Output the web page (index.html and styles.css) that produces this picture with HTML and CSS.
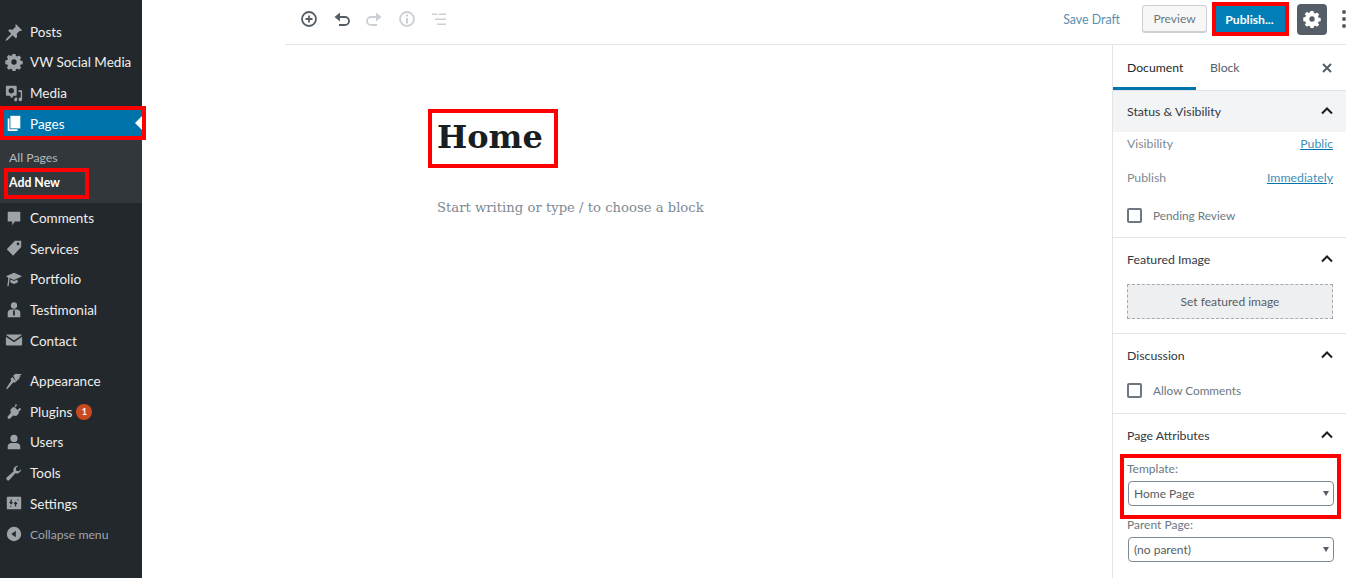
FILE: index.html
```html
<!DOCTYPE html>
<html lang="en">
<head>
    <meta charset="UTF-8">
    <meta name="viewport" content="width=device-width, initial-scale=1.0">
    <title>Edit Page</title>
    <link rel="stylesheet" href="styles.css">
</head>
<body>
    <aside class="admin-menu">
        <a class="menu-item"><svg class="menu-icon" viewBox="0 0 20 20"><path d="M12 1l7 7-1.500 1-1-.5-3.500 3.500.5 3.500-1.500 1.500-3.500-3.500-5.500 5.500-2.500 1 1-2.500 5.500-5.500-3.500-3.500 1.500-1.500 3.500.5 3.500-3.500-.5-1z"/></svg>Posts</a>
        <a class="menu-item"><svg class="menu-icon" viewBox="0 0 20 20"><path fill-rule="evenodd" d="M8.300 1h3.400l.4 2.300 1.600.7 1.900-1.300 2.400 2.400-1.300 1.900.7 1.600 2.300.4v3.400l-2.300.4-.7 1.600 1.300 1.900-2.400 2.400-1.900-1.300-1.600.7-.4 2.300H8.300l-.4-2.300-1.600-.7-1.900 1.300-2.400-2.400 1.300-1.900-.7-1.600-2.300-.4V8.300l2.300-.4.700-1.600-1.300-1.900 2.400-2.400 1.900 1.300 1.600-.7zM10 7a3 3 0 1 0 0 6 3 3 0 0 0 0-6z"/></svg>VW Social Media</a>
        <a class="menu-item"><svg class="menu-icon" viewBox="0 0 20 20"><path fill-rule="evenodd" d="M2 2h10a1 1 0 0 1 1 1v9a1 1 0 0 1-1 1H9v2H6v-2H2a1 1 0 0 1-1-1V3a1 1 0 0 1 1-1zm5 2.500a3 3 0 1 0 0 6 3 3 0 0 0 0-6z"/><path d="M15 7h4v10a2 2 0 1 1-1.500-1.900V9H15zM11 15h2.500v2a1.700 1.700 0 1 1-2.500-1z"/></svg>Media</a>
        <a class="menu-item is-current"><svg class="menu-icon" viewBox="0 0 20 20"><path d="M6 2h11v14H6z"/><path d="M3 5h2v12h9v2H3z"/></svg>Pages</a>
        <div class="submenu">
            <a class="submenu-item">All Pages</a>
            <a class="submenu-item is-active">Add New</a>
        </div>
        <a class="menu-item"><svg class="menu-icon" viewBox="0 0 20 20"><path d="M4 3h12a1 1 0 0 1 1 1v9a1 1 0 0 1-1 1h-5l-3 4v-4H4a1 1 0 0 1-1-1V4a1 1 0 0 1 1-1z"/></svg>Comments</a>
        <a class="menu-item"><svg class="menu-icon" viewBox="0 0 20 20"><path fill-rule="evenodd" d="M11 2h7v7l-9 9.500-7-7zm3.500 2a1.500 1.500 0 1 0 0 3 1.500 1.500 0 0 0 0-3z"/></svg>Services</a>
        <a class="menu-item"><svg class="menu-icon" viewBox="0 0 20 20"><path d="M10 3l9 4-9 4-5-2.200V11L4 18H2.500l1-7V8.300L1 7z"/><path d="M6 10.500l4 1.800 4-1.800V14l-4 1.500L6 14z"/></svg>Portfolio</a>
        <a class="menu-item"><svg class="menu-icon" viewBox="0 0 20 20"><circle cx="10" cy="5" r="3.500"/><path fill-rule="evenodd" d="M3 18v-5c0-2 1.500-3.500 4-3.500h6c2.500 0 4 1.500 4 3.500v5zM9 10.500V16h2v-5.500z"/></svg>Testimonial</a>
        <a class="menu-item"><svg class="menu-icon" viewBox="0 0 20 20"><path d="M2 4h16a1 1 0 0 1 .8.400L10 10.500 1.200 4.400A1 1 0 0 1 2 4z"/><path d="M1 6.500l9 6 9-6V15a1 1 0 0 1-1 1H2a1 1 0 0 1-1-1z"/></svg>Contact</a>
        <a class="menu-item has-gap"><svg class="menu-icon" viewBox="0 0 20 20"><path d="M9 4l3-2 7 .5-3 2 1.500 1-2 1 .5 1.500-2 .5-1 2-1-.5z"/><path d="M8 5.500l4.500 5-1.500 1.500L9.500 11 3 18.500H1L7 9.500 6 8z"/></svg>Appearance</a>
        <a class="menu-item"><svg class="menu-icon" viewBox="0 0 20 20"><path d="M12 2l1.500 1.500L11 6l3 3 2.500-2.500L18 8l-3 3 .5 1.500-3 3-3.500-.5-3.500 3.500H3v-2.500L6.500 12 6 8.500l3-3L10.500 6z"/></svg>Plugins<span class="update-badge">1</span></a>
        <a class="menu-item"><svg class="menu-icon" viewBox="0 0 20 20"><circle cx="10" cy="6" r="4"/><path d="M3 18v-3c0-2.500 2-4 4-4h6c2 0 4 1.500 4 4v3z"/></svg>Users</a>
        <a class="menu-item"><svg class="menu-icon" viewBox="0 0 20 20"><path d="M18 5.500a5 5 0 0 1-6.500 4.800l-6.700 7.400a2 2 0 0 1-3-2.600l7.600-6.700A5 5 0 0 1 15 2l-3 2.500.5 3 3 .5z"/></svg>Tools</a>
        <a class="menu-item"><svg class="menu-icon" viewBox="0 0 20 20"><path fill-rule="evenodd" d="M3 3h14a1 1 0 0 1 1 1v12a1 1 0 0 1-1 1H3a1 1 0 0 1-1-1V4a1 1 0 0 1 1-1zm3 3v3H4.500L6.800 12 9 9H7.500V6zm1 8.500v-1H5.500v1zM12.500 14V11H14l-2.200-3L9.500 11H11v3zm2.500-8v1h-1.500V6z"/></svg>Settings</a>
        <a class="menu-item is-collapse"><svg class="menu-icon" viewBox="0 0 20 20"><path fill-rule="evenodd" d="M10 2a8 8 0 1 1 0 16 8 8 0 0 1 0-16zm2 4.500L7 10l5 3.500z"/></svg>Collapse menu</a>
    </aside>

    <div class="editor">
        <header class="toolbar">
            <div class="toolbar-left">
                <svg class="tool-icon" viewBox="0 0 20 20"><circle cx="10" cy="10" r="7" class="line"/><path d="M10 6.500v7M6.500 10h7" class="line"/></svg>
                <svg class="tool-icon" viewBox="0 0 20 20"><path d="M4 8h9a4 4 0 0 1 0 8H7" class="line"/><path d="M8 3.500v9L2.500 8z"/></svg>
                <svg class="tool-icon is-off" viewBox="0 0 20 20"><path d="M16 8H7a4 4 0 0 0 0 8h6" class="line"/><path d="M12 3.500v9L17.500 8z"/></svg>
                <svg class="tool-icon is-off" viewBox="0 0 20 20"><circle cx="10" cy="10" r="7" class="line"/><path d="M9 9h2v5.500H9zM9 5.500h2v2H9z"/></svg>
                <svg class="tool-icon is-off" viewBox="0 0 20 20"><path d="M3 4.500h5v1.500H3zM6 9.500h11V11H6zM8 14.500h9V16H8zM9.500 4.500H17V6H9.500z"/></svg>
            </div>
            <div class="toolbar-right">
                <a class="save-draft">Save Draft</a>
                <button class="btn-preview">Preview</button>
                <button class="btn-publish">Publish...</button>
                <button class="btn-settings"><svg viewBox="0 0 20 20"><path fill-rule="evenodd" d="M8.300 1h3.400l.4 2.300 1.600.7 1.900-1.300 2.400 2.400-1.300 1.900.7 1.600 2.300.4v3.400l-2.300.4-.7 1.600 1.300 1.900-2.400 2.400-1.900-1.300-1.600.7-.4 2.300H8.300l-.4-2.300-1.600-.7-1.900 1.300-2.400-2.400 1.300-1.900-.7-1.600-2.300-.4V8.300l2.300-.4.700-1.600-1.300-1.900 2.400-2.400 1.900 1.300 1.600-.7zM10 7a3 3 0 1 0 0 6 3 3 0 0 0 0-6z"/></svg></button>
                <div class="more-dots"><i></i><i></i><i></i></div>
            </div>
        </header>

        <div class="editor-body">
            <main class="canvas">
                <h1 class="post-title">Home</h1>
                <p class="placeholder">Start writing or type / to choose a block</p>
            </main>

            <aside class="settings">
                <div class="tabs">
                    <span class="tab is-active">Document</span>
                    <span class="tab">Block</span>
                    <svg class="close-icon" viewBox="0 0 10 10"><path d="M1 1l8 8M9 1L1 9"/></svg>
                </div>

                <section class="panel panel-status">
                    <div class="panel-head is-shaded"><span>Status &amp; Visibility</span><svg class="chevron" viewBox="0 0 12 8"><path d="M1 6.500l5-5 5 5"/></svg></div>
                    <div class="row row-visibility"><span>Visibility</span><a>Public</a></div>
                    <div class="row row-publish"><span>Publish</span><a>Immediately</a></div>
                    <label class="check check-pending"><input type="checkbox">Pending Review</label>
                </section>

                <section class="panel panel-image">
                    <div class="panel-head"><span>Featured Image</span><svg class="chevron" viewBox="0 0 12 8"><path d="M1 6.500l5-5 5 5"/></svg></div>
                    <button class="set-image">Set featured image</button>
                </section>

                <section class="panel panel-discussion">
                    <div class="panel-head"><span>Discussion</span><svg class="chevron" viewBox="0 0 12 8"><path d="M1 6.500l5-5 5 5"/></svg></div>
                    <label class="check"><input type="checkbox">Allow Comments</label>
                </section>

                <section class="panel panel-attrs">
                    <div class="panel-head"><span>Page Attributes</span><svg class="chevron" viewBox="0 0 12 8"><path d="M1 6.500l5-5 5 5"/></svg></div>
                    <label class="field-label">Template:</label>
                    <div class="select-wrap"><select><option>Home Page</option></select></div>
                    <label class="field-label">Parent Page:</label>
                    <div class="select-wrap"><select><option>(no parent)</option></select></div>
                </section>
            </aside>
        </div>
    </div>

    <!-- red annotation boxes drawn over the screenshot -->
    <div class="mark mark-pages"></div>
    <div class="mark mark-add"></div>
    <div class="mark mark-title"></div>
    <div class="mark mark-publish"></div>
    <div class="mark mark-template"></div>
</body>
</html>
```

FILE: styles.css
```css
* {
    box-sizing: border-box;
}
html, body {
    height: 100%;
    overflow: hidden;
}
body {
    display: flex;
    margin: 0;
    font-family: Lato, "Noto Sans", sans-serif;
    font-size: 12.5px;
    color: #555d66;
    background-color: #ffffff;
}

/* admin menu */
.admin-menu {
    width: 142px;
    flex: none;
    padding-top: 16.5px;
    background-color: #23282d;
}
.menu-item {
    position: relative;
    display: flex;
    align-items: center;
    height: 30.6px;
    padding-left: 30px;
    font-size: 13.5px;
    color: #eeeeee;
}
.menu-item.has-gap {
    margin-top: 10px;
}
.menu-icon {
    position: absolute;
    left: 5px;
    top: 6px;
    width: 18px;
    height: 18px;
    fill: #9ea3a8;
}
.menu-item.is-current {
    color: #ffffff;
    background-color: #0073aa;
}
.menu-item.is-current .menu-icon {
    fill: #ffffff;
}
.menu-item.is-current::after {
    content: "";
    position: absolute;
    right: 0;
    top: 8px;
    border: 7px solid transparent;
    border-right-color: #ffffff;
    border-left-width: 0;
}
.menu-item.is-collapse {
    font-size: 12.2px;
    color: #a0a5aa;
}
.submenu {
    display: flex;
    flex-direction: column;
    height: 64px;
    padding: 6px 0 0 9px;
    background-color: #32373c;
}
.submenu-item {
    height: 25px;
    line-height: 25px;
    font-size: 12.3px;
    color: #b4b9be;
}
.submenu-item.is-active {
    font-weight: 700;
    color: #ffffff;
}
.update-badge {
    width: 16px;
    height: 16px;
    margin-left: 4px;
    border-radius: 50%;
    font-size: 9px;
    font-weight: 700;
    line-height: 16px;
    text-align: center;
    color: #ffffff;
    background-color: #ca4a1f;
}

/* editor */
.editor {
    flex: 1;
    display: flex;
    flex-direction: column;
    min-width: 0;
    padding-left: 143px;
}
.toolbar {
    display: flex;
    justify-content: space-between;
    align-items: center;
    height: 45px;
    padding-bottom: 6px;
    border-bottom: 1px solid #e2e4e7;
}
.toolbar-left {
    display: flex;
    align-items: center;
    gap: 12.5px;
    padding-left: 14px;
}
.tool-icon {
    width: 20px;
    height: 20px;
    fill: #555d66;
}
.tool-icon .line {
    fill: none;
    stroke: #555d66;
    stroke-width: 1.8;
}
.tool-icon.is-off {
    fill: #ccd0d4;
}
.tool-icon.is-off .line {
    stroke: #ccd0d4;
}
.toolbar-right {
    display: flex;
    align-items: center;
    height: 38px;
}
.save-draft {
    margin-right: 22px;
    font-size: 12.4px;
    color: #5b8fb0;
}
.btn-preview {
    width: 65px;
    height: 28px;
    padding: 0;
    border: 1px solid #ccd0d4;
    border-bottom-width: 2px;
    border-radius: 3px;
    font: inherit;
    font-size: 12px;
    color: #6c7781;
    background-color: #f7f7f7;
}
.btn-publish {
    width: 69px;
    height: 28px;
    margin-left: 9px;
    padding: 0 2px 0 0;
    border: none;
    font: inherit;
    font-size: 12.2px;
    font-weight: 700;
    color: #ffffff;
    background-color: #007fb6;
}
.btn-settings {
    display: flex;
    justify-content: center;
    align-items: center;
    width: 30px;
    height: 31px;
    margin-left: 12px;
    padding: 0;
    border: none;
    border-radius: 4px;
    background-color: #555d66;
}
.btn-settings svg {
    width: 18px;
    height: 18px;
    fill: #ffffff;
}
.more-dots {
    display: flex;
    flex-direction: column;
    gap: 3px;
    width: 19px;
    padding-left: 15px;
}
.more-dots i {
    width: 4px;
    height: 4px;
    border-radius: 50%;
    background-color: #555d66;
}
.editor-body {
    flex: 1;
    display: flex;
    min-height: 0;
}
.canvas {
    flex: 1;
    padding: 72px 0 0 152px;
}
.post-title {
    margin: 0;
    font-family: "DejaVu Serif", serif;
    font-size: 32px;
    line-height: 40px;
    color: #191e23;
}
.placeholder {
    margin: 41px 0 0;
    font-family: "DejaVu Serif", serif;
    font-size: 13.2px;
    line-height: 20px;
    color: #7e8993;
}

/* settings sidebar */
.settings {
    width: 234px;
    flex: none;
    border-left: 1px solid #e2e4e7;
}
.tabs {
    position: relative;
    display: flex;
    height: 46px;
    border-bottom: 1px solid #e2e4e7;
}
.tab {
    padding: 0 14px;
    font-size: 12.2px;
    line-height: 46px;
    color: #555d66;
}
.tab.is-active {
    width: 83px;
    color: #23282d;
    box-shadow: inset 0 -3px 0 #0073aa;
}
.close-icon {
    position: absolute;
    right: 14px;
    top: 18px;
    width: 10px;
    height: 10px;
    fill: none;
    stroke: #555d66;
    stroke-width: 2;
}
.panel {
    padding-bottom: 14px;
    border-bottom: 1px solid #e2e4e7;
}
.panel-status {
    height: 147px;
}
.panel-image {
    height: 96px;
}
.panel-discussion {
    height: 80px;
}
.panel-attrs {
    border-bottom: none;
}
.panel-head {
    display: flex;
    justify-content: space-between;
    align-items: center;
    height: 42px;
    padding: 0 13px 0 14px;
    font-size: 12.3px;
    color: #32373c;
}
.panel-head.is-shaded {
    height: 41px;
    padding-bottom: 1px;
    background-color: #f3f4f5;
}
.chevron {
    width: 12px;
    height: 8px;
    fill: none;
    stroke: #191e23;
    stroke-width: 2;
}
.row {
    display: flex;
    justify-content: space-between;
    align-items: center;
    height: 20px;
    padding: 0 13px 0 14px;
    font-size: 12.3px;
    color: #7e8993;
}
.row-visibility {
    margin-top: 1px;
}
.row-publish {
    margin-top: 14px;
}
.row a {
    color: #3d8fb8;
    text-decoration: underline;
    text-decoration-color: #0073aa;
}
.check {
    display: flex;
    align-items: center;
    gap: 11px;
    height: 16px;
    padding-left: 14px;
    font-size: 11.8px;
    color: #6c7781;
}
.check-pending {
    margin-top: 20px;
}
.check input {
    appearance: none;
    width: 15px;
    height: 15px;
    margin: 0;
    border: 2px solid #6c7781;
    border-radius: 2px;
    background-color: #ffffff;
}
.set-image {
    display: block;
    width: 206px;
    height: 35px;
    margin: 4px 0 0 14px;
    border: 1px dashed #a2aab2;
    font: inherit;
    font-size: 12px;
    color: #555d66;
    background-color: #edeff0;
}
.panel-discussion .check {
    margin-top: 6px;
}
.field-label {
    display: block;
    height: 18px;
    padding-left: 14px;
    font-size: 12px;
    line-height: 18px;
    color: #6c7781;
}
.panel-attrs .field-label:first-of-type {
    margin-top: 4px;
}
.select-wrap {
    position: relative;
    width: 206px;
    height: 25px;
    margin: 3px 0 10px 15px;
}
.select-wrap::after {
    content: "";
    position: absolute;
    right: 5px;
    top: 10px;
    border: 3.5px solid transparent;
    border-top: 5px solid #555d66;
    border-bottom-width: 0;
}
.select-wrap select {
    appearance: none;
    width: 100%;
    height: 100%;
    padding: 0 5px;
    border: 1px solid #7e8993;
    border-radius: 4px;
    font: inherit;
    font-size: 12px;
    color: #555d66;
    background-color: #ffffff;
}

/* annotations */
.mark {
    position: absolute;
    border: 4px solid #ff0000;
}
.mark-pages {
    left: 0;
    top: 106px;
    width: 146px;
    height: 34px;
}
.mark-add {
    left: 4px;
    top: 168px;
    width: 85px;
    height: 31px;
}
.mark-title {
    left: 428px;
    top: 109px;
    width: 130px;
    height: 59px;
}
.mark-publish {
    left: 1212px;
    top: 2px;
    width: 77px;
    height: 34px;
}
.mark-template {
    left: 1120px;
    top: 454px;
    width: 221px;
    height: 65px;
}
```
